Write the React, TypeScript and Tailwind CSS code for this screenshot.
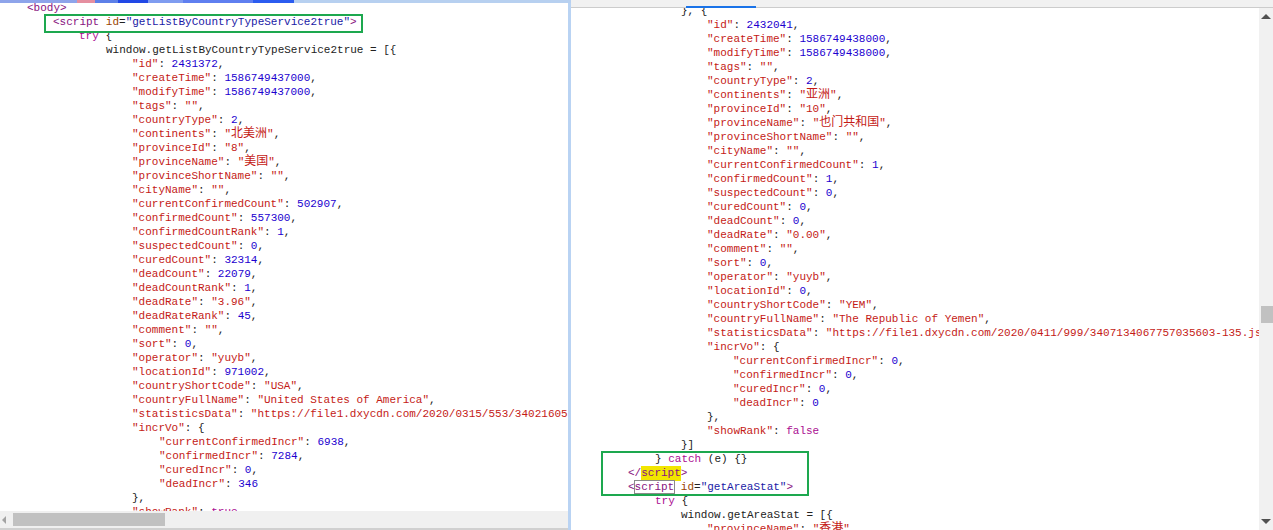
const S = ({ c }: { c: string }) => <span className="text-[#c41a16]">{c}</span>;
const C = ({ c }: { c: string }) => (
  <span className="text-[#c41a16]">
    "<span className="text-[12px]">{c}</span>"
  </span>
);
const N = ({ c }: { c: string }) => <span className="text-[#1c00cf]">{c}</span>;
const K = ({ c }: { c: string }) => <span className="text-[#aa0d91]">{c}</span>;
const T = ({ c }: { c: string }) => <span className="text-[#881280]">{c}</span>;

type Line = [number, React.ReactNode];

const kv = (k: string, v: React.ReactNode, comma = true): React.ReactNode => (
  <>
    <S c={`"${k}"`} />: {v}
    {comma ? "," : ""}
  </>
);
const s = (v: string) => <S c={`"${v}"`} />;
const n = (v: string) => <N c={v} />;
const c = (v: string) => <C c={v} />;

const left: Line[] = [
  [27, <T c="<body>" />],
  [53, <><T c="<script " /><span className="text-[#994500]">id</span>=<span className="text-[#1a1aa6]">"getListByCountryTypeService2true"</span><T c=">" /></>],
  [79, <><K c="try" /> {"{"}</>],
  [106, <>window.getListByCountryTypeService2true = [{"{"}</>],
  [132, kv("id", n("2431372"))],
  [132, kv("createTime", n("1586749437000"))],
  [132, kv("modifyTime", n("1586749437000"))],
  [132, kv("tags", s(""))],
  [132, kv("countryType", n("2"))],
  [132, kv("continents", c("北美洲"))],
  [132, kv("provinceId", s("8"))],
  [132, kv("provinceName", c("美国"))],
  [132, kv("provinceShortName", s(""))],
  [132, kv("cityName", s(""))],
  [132, kv("currentConfirmedCount", n("502907"))],
  [132, kv("confirmedCount", n("557300"))],
  [132, kv("confirmedCountRank", n("1"))],
  [132, kv("suspectedCount", n("0"))],
  [132, kv("curedCount", n("32314"))],
  [132, kv("deadCount", n("22079"))],
  [132, kv("deadCountRank", n("1"))],
  [132, kv("deadRate", s("3.96"))],
  [132, kv("deadRateRank", n("45"))],
  [132, kv("comment", s(""))],
  [132, kv("sort", n("0"))],
  [132, kv("operator", s("yuyb"))],
  [132, kv("locationId", n("971002"))],
  [132, kv("countryShortCode", s("USA"))],
  [132, kv("countryFullName", s("United States of America"))],
  [132, kv("statisticsData", <S c={'"https://file1.dxycdn.com/2020/0315/553/3402160512808052518-135.json"'} />)],
  [132, <><S c='"incrVo"' />: {"{"}</>],
  [159, kv("currentConfirmedIncr", n("6938"))],
  [159, kv("confirmedIncr", n("7284"))],
  [159, kv("curedIncr", n("0"))],
  [159, kv("deadIncr", n("346"), false)],
  [132, <>{"},"}</>],
  [132, kv("showRank", <K c="true" />)],
];

const right: Line[] = [
  [681, <>{"}, {"}</>],
  [707, kv("id", n("2432041"))],
  [707, kv("createTime", n("1586749438000"))],
  [707, kv("modifyTime", n("1586749438000"))],
  [707, kv("tags", s(""))],
  [707, kv("countryType", n("2"))],
  [707, kv("continents", c("亚洲"))],
  [707, kv("provinceId", s("10"))],
  [707, kv("provinceName", c("也门共和国"))],
  [707, kv("provinceShortName", s(""))],
  [707, kv("cityName", s(""))],
  [707, kv("currentConfirmedCount", n("1"))],
  [707, kv("confirmedCount", n("1"))],
  [707, kv("suspectedCount", n("0"))],
  [707, kv("curedCount", n("0"))],
  [707, kv("deadCount", n("0"))],
  [707, kv("deadRate", s("0.00"))],
  [707, kv("comment", s(""))],
  [707, kv("sort", n("0"))],
  [707, kv("operator", s("yuyb"))],
  [707, kv("locationId", n("0"))],
  [707, kv("countryShortCode", s("YEM"))],
  [707, kv("countryFullName", s("The Republic of Yemen"))],
  [707, kv("statisticsData", <S c={'"https://file1.dxycdn.com/2020/0411/999/3407134067757035603-135.json"'} />)],
  [707, <><S c='"incrVo"' />: {"{"}</>],
  [733, kv("currentConfirmedIncr", n("0"))],
  [733, kv("confirmedIncr", n("0"))],
  [733, kv("curedIncr", n("0"))],
  [733, kv("deadIncr", n("0"), false)],
  [707, <>{"},"}</>],
  [707, kv("showRank", <K c="false" />, false)],
  [681, <>{"}]"}</>],
  [655, <>{"} "}<K c="catch" /> (e) {"{}"}</>],
  [628, <><T c="</" /><span className="inline-block h-[15px] bg-[#f2e600] leading-[14px] text-[#881280]">script</span><T c=">" /></>],
  [628, <><T c="<" /><span className="text-[#881280] outline outline-1 outline-[#8a8a8a]">script</span> <span className="text-[#994500]">id</span>=<span className="text-[#1a1aa6]">"getAreaStat"</span><T c=">" /></>],
  [655, <><K c="try" /> {"{"}</>],
  [681, <>window.getAreaStat = [{"{"}</>],
  [707, kv("provinceName", c("香港"))],
];

function Code({ lines, origin, top }: { lines: Line[]; origin: number; top: number }) {
  return (
    <div style={{ marginTop: top }}>
      {lines.map(([x, node], i) => (
        <div key={i} className="h-[14px] whitespace-pre leading-[14px]" style={{ paddingLeft: x - origin }}>
          {node}
        </div>
      ))}
    </div>
  );
}

export default function App() {
  return (
    <div className="relative flex h-[530px] w-[1273px] overflow-hidden bg-white font-['Liberation_Mono','Noto_Sans_CJK_SC',monospace] text-[11px] text-[#222222]">
      <div className="flex w-[571px] shrink-0 flex-col">
        <div className="flex h-[3px] shrink-0">
          <div className="h-full w-[77px] bg-[#8ea4ea]" />
          <div className="h-full w-[18px] bg-[#e58fa0]" />
          <div className="h-full w-[23px] bg-[#5d80e8]" />
          <div className="h-full w-[30px] bg-[#2148e6]" />
          <div className="h-full w-[35px] bg-[#7f9cf0]" />
          <div className="h-full w-[70px] bg-[#5f7ff0]" />
          <div className="h-full w-[41px] bg-[#2b5cf0]" />
          <div className="h-full flex-1 bg-[#b7d0f0]" />
        </div>
        <div className="flex min-h-0 flex-1 border-r-[3px] border-r-[#b9d3f3]">
          <div className="flex min-w-0 flex-1 flex-col">
            <div className="min-h-0 flex-1 overflow-hidden">
              <Code lines={left} origin={0} top={-2} />
            </div>
            <div className="flex h-[17px] shrink-0 items-center bg-[#f0f0f0]">
              <div className="ml-[2px] h-0 w-0 border-y-[4px] border-r-[4px] border-y-transparent border-r-[#a3a3a3]" />
              <div className="ml-[7px] h-[13px] w-[152px] bg-[#c1c1c1]" />
            </div>
            <div className="h-[2px] shrink-0 bg-[#d0d0d0]" />
          </div>
        </div>
      </div>
      <div className="flex min-w-0 flex-1 flex-col">
        <div className="relative h-[8px] shrink-0 border-b border-b-[#cccccc] bg-[#f1f1f1]">
          <div className="absolute left-[115px] top-[6px] h-[2px] w-[70px] bg-[#1a73e8]" />
        </div>
        <div className="flex min-h-0 flex-1">
          <div className="min-w-0 flex-1 overflow-hidden">
            <Code lines={right} origin={571} top={-4} />
          </div>
          <div className="flex w-[14px] shrink-0 flex-col items-end justify-between bg-[#f1f1f1]">
            <div className="mr-[2px] mt-[6px] h-0 w-0 border-x-[5px] border-b-[5px] border-x-transparent border-b-[#505050]" />
            <div className="absolute right-0 top-[306px] h-[17px] w-[12px] bg-[#c1c1c1]" />
            <div className="mb-[6px] mr-[2px] h-0 w-0 border-x-[5px] border-t-[5px] border-x-transparent border-t-[#505050]" />
          </div>
        </div>
      </div>
      <div className="pointer-events-none absolute left-[44px] top-[14px] h-[19px] w-[319px] border-2 border-[#1da84f]" />
      <div className="pointer-events-none absolute left-[601px] top-[451px] h-[45px] w-[208px] border-2 border-[#1da84f]" />
    </div>
  );
}
